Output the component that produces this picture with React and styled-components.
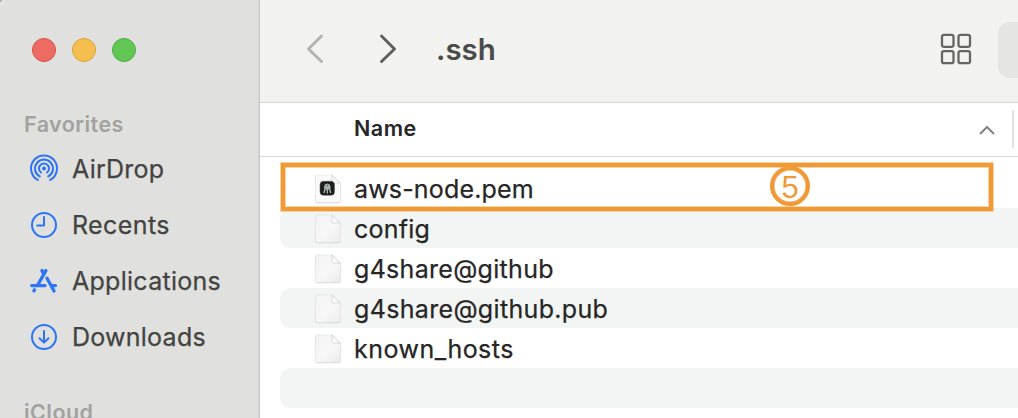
import React from 'react';
import styled, { createGlobalStyle } from 'styled-components';

const GlobalStyle = createGlobalStyle`
  * { box-sizing: border-box; }
  body { margin: 0; overflow: hidden; background: #fff; font-family: Inter, "Liberation Sans", sans-serif; }
`;

const Window = styled.div`
  position: relative;
  display: flex;
  width: 1018px;
  height: 418px;
  overflow: hidden;
  background: #fff;
`;

const Sidebar = styled.aside`
  flex: none;
  width: 260px;
  height: 418px;
  overflow: hidden;
  padding: 38px 0 0 24px;
  background: linear-gradient(135deg, #b5b5b3 1.5px, #f2f2f1 3px, #e0e0de 4.5px);
  border-right: 1px solid #c8c8c6;
  box-shadow: inset -2px 0 1px -1px #d4d4d2;
`;

const TrafficLights = styled.div`
  display: flex;
  gap: 16px;
  padding-left: 8px;
  height: 24px;
`;

const Light = styled.span`
  width: 24px;
  height: 24px;
  border-radius: 50%;
  background: ${(p) => p.$fill};
  border: 1px solid ${(p) => p.$edge};
`;

const SectionTitle = styled.h2`
  margin: ${(p) => p.$top}px 0 0;
  height: 28px;
  line-height: 28px;
  font-size: 21.5px;
  font-weight: 600;
  color: #a2a2a0;
  letter-spacing: 0.45px;
  white-space: nowrap;
`;

const NavList = styled.nav`
  display: flex;
  flex-direction: column;
  margin-top: 3px;
`;

const NavItem = styled.a`
  display: flex;
  align-items: center;
  height: 56px;
  gap: 8px;
  color: #434341;
`;

const NavIcon = styled.svg`
  flex: none;
  width: 40px;
  height: 40px;
  fill: none;
  stroke: #2d74f6;
  stroke-width: ${(p) => p.$weight || 2};
  stroke-linecap: round;
  stroke-linejoin: round;
`;

const Label = styled.span`
  font-size: 25px;
  line-height: 30px;
  white-space: nowrap;
  letter-spacing: ${(p) => p.$tracking}px;
  -webkit-text-stroke: 0.25px currentColor;
`;

const Main = styled.main`
  flex: 1;
  min-width: 0;
  display: flex;
  flex-direction: column;
`;

const Toolbar = styled.header`
  flex: none;
  display: flex;
  align-items: center;
  height: 103px;
  padding: 0 0 5px 44px;
  background: #f2f2f0;
  border-bottom: 1px solid #d5d5d4;
`;

const Chevron = styled.svg`
  flex: none;
  width: 24px;
  height: 36px;
  margin-right: ${(p) => p.$gap}px;
  fill: none;
  stroke: ${(p) => p.$color};
  stroke-width: 3;
  stroke-linecap: round;
  stroke-linejoin: round;
`;

const Title = styled.h1`
  margin: 0;
  flex: 1;
  font-size: 29.5px;
  line-height: 36px;
  font-weight: 600;
  color: #4b4b4a;
`;

const GridIcon = styled.svg`
  flex: none;
  width: 32px;
  height: 32px;
  margin-right: 26px;
  fill: none;
  stroke: #666664;
  stroke-width: 2.3;
`;

const ViewButton = styled.div`
  flex: none;
  width: 20px;
  height: 56px;
  margin-top: 2px;
  border-radius: 12px 0 0 12px;
  background: #e5e5e3;
`;

const ColumnHeader = styled.div`
  flex: none;
  display: flex;
  align-items: center;
  height: 54px;
  padding: 0 4px 2px 94px;
  border-bottom: 1px solid #d9d9d9;
`;

const ColumnName = styled.span`
  flex: 1;
  margin-bottom: 2px;
  font-size: 21.5px;
  line-height: 28px;
  font-weight: 600;
  color: #262626;
  letter-spacing: 0.5px;
`;

const SortArrow = styled.svg`
  width: 18px;
  height: 12px;
  margin: 3px 16px 0 0;
  fill: none;
  stroke: #838383;
  stroke-width: 2;
`;

const Divider = styled.span`
  width: 2px;
  height: 38px;
  margin-top: 1px;
  background: #e2e2e2;
`;

const FileList = styled.div`
  display: flex;
  flex-direction: column;
  padding: 11px 0 0 20px;
`;

const FileRow = styled.div`
  display: flex;
  align-items: center;
  height: 40px;
  padding-left: 32px;
  gap: 6px;
  color: #262626;
  border-radius: 10px 0 0 10px;
  background: ${(p) => (p.$shaded ? '#f3f5f4' : 'transparent')};

  ${Label} {
    padding-top: 2px;
  }
`;

const FileIcon = styled.svg`
  flex: none;
  width: 36px;
  height: 36px;
`;

const Highlight = styled.div`
  position: absolute;
  left: 281px;
  top: 163px;
  width: 712px;
  height: 48px;
  border: 4px solid #f09a37;
  box-shadow: 0 0 0 1px #f9d3a3, inset 0 0 0 1px #f9d3a3;
`;

const StepBadge = styled.div`
  position: absolute;
  left: 770px;
  top: 166px;
  width: 40px;
  height: 40px;
  display: flex;
  align-items: center;
  justify-content: center;
  padding-top: 2px;
  border: 4.5px solid #f09a37;
  border-radius: 50%;
  font: 31px/31px "Liberation Sans", sans-serif;
  color: #f09a37;
  box-shadow: inset 0 0 0 0.5px #f09a37;
`;

const AirDropIcon = () => (
  <NavIcon viewBox="0 0 40 40">
    <circle cx="20" cy="19.5" r="2" fill="#2d74f6" stroke="none" />
    <path d="M17 23.5A5 5 0 1 1 23 23.5" />
    <path d="M15.7 27.4A9 9 0 1 1 24.3 27.4" />
    <path d="M13.8 30.9A13 13 0 1 1 26.2 30.9" />
  </NavIcon>
);

const RecentsIcon = () => (
  <NavIcon viewBox="0 0 40 40">
    <circle cx="20" cy="20" r="12" />
    <path d="M20 12V20.5H13.2" />
  </NavIcon>
);

const ApplicationsIcon = () => (
  <NavIcon viewBox="0 0 40 40" $weight={3.3}>
    <path d="M21.9 9.6L14 23.5" />
    <path d="M17.9 9.6L19.5 12.4" />
    <path d="M23 17.2L30 30" />
    <path d="M7.7 24.6H21M27.5 24.6H31.5" />
    <path d="M10.5 28.8L9.9 29.8" />
  </NavIcon>
);

const DownloadsIcon = () => (
  <NavIcon viewBox="0 0 40 40">
    <circle cx="20" cy="20" r="12" />
    <path d="M20 14V25M15.5 21.3L20 25.6L24.5 21.3" />
  </NavIcon>
);

const DocumentIcon = ({ keychain }) => (
  <FileIcon viewBox="0 0 36 36">
    <defs>
      <linearGradient id="page" x1="0" y1="0" x2="1" y2="1">
        <stop offset="0" stopColor="#f3f3f3" />
        <stop offset=".55" stopColor="#f7f7f7" />
        <stop offset="1" stopColor="#ebebeb" />
      </linearGradient>
      <linearGradient id="fold" x1="0" y1="1" x2="1" y2="0">
        <stop offset="0" stopColor="#fff" />
        <stop offset=".5" stopColor="#fafafa" />
        <stop offset="1" stopColor="#dcdcdc" />
      </linearGradient>
    </defs>
    <path d="M4.5 6H20.5L28.5 13.3V32Q28.5 33.2 27 33.2H5Q3.5 33.2 3.5 32V7Q3.5 6 4.5 6Z" fill="#c4c4c4" opacity=".75" />
    <path d="M4.5 5H20L28.5 13V31.2Q28.5 32.4 27.3 32.4H4.7Q3.5 32.4 3.5 31.2V6Q3.5 5 4.5 5Z" fill={keychain ? '#fafafa' : 'url(#page)'} stroke="#e0e0e0" strokeWidth=".6" />
    <path d="M20 5L28 13H21Q20 13 20 12Z" fill="url(#fold)" stroke="#cacaca" strokeWidth=".7" />
    {keychain && (
      <g>
        <rect x="8" y="11.3" width="14.5" height="14" rx="3.5" fill="#1c1c1c" stroke="#555" strokeWidth=".5" />
        <path d="M12.8 14.6L15.2 13.4L17.8 14.6L18.8 17.5L17.6 19.5H13L11.8 17.5Z" fill="#a8afaf" />
        <path d="M13 18.8L12 23M15.3 19V23.6M17.6 18.8L18.6 23" stroke="#b6baba" strokeWidth="1.3" />
        <circle cx="15.3" cy="15.6" r=".8" fill="#525959" />
      </g>
    )}
  </FileIcon>
);

const places = [
  { name: 'AirDrop', Icon: AirDropIcon, tracking: 0.25 },
  { name: 'Recents', Icon: RecentsIcon, tracking: 0.4 },
  { name: 'Applications', Icon: ApplicationsIcon, tracking: 0.28 },
  { name: 'Downloads', Icon: DownloadsIcon, tracking: 0.25 },
];

const files = [
  { name: 'aws-node.pem', keychain: true, tracking: 0.17 },
  { name: 'config', tracking: 0.25 },
  { name: 'g4share@github', tracking: 0.3 },
  { name: 'g4share@github.pub', tracking: 0.33 },
  { name: 'known_hosts', tracking: 0.48 },
];

export default function App() {
  return (
    <>
      <GlobalStyle />
      <Window>
        <Sidebar>
          <TrafficLights>
            <Light $fill="#ed6b60" $edge="#d35047" />
            <Light $fill="#f5bf4f" $edge="#d9a13c" />
            <Light $fill="#62c655" $edge="#4fae42" />
          </TrafficLights>
          <SectionTitle $top={48}>Favorites</SectionTitle>
          <NavList>
            {places.map(({ name, Icon, tracking }) => (
              <NavItem key={name}>
                <Icon />
                <Label $tracking={tracking}>{name}</Label>
              </NavItem>
            ))}
          </NavList>
          <SectionTitle $top={33}>iCloud</SectionTitle>
        </Sidebar>
        <Main>
          <Toolbar>
            <Chevron viewBox="0 0 24 36" $color="#b3b3b1" $gap={48}>
              <path d="M17.5 5L4.5 18L17.5 30.5" />
            </Chevron>
            <Chevron viewBox="0 0 24 36" $color="#5f5f5d" $gap={36}>
              <path d="M5.5 5L18.5 18L5.5 30.5" />
            </Chevron>
            <Title>.ssh</Title>
            <GridIcon viewBox="0 0 32 32">
              <rect x="2" y="1.8" width="11.5" height="12" rx="2" />
              <rect x="18.5" y="1.8" width="11.5" height="12" rx="2" />
              <rect x="2" y="18.2" width="11.5" height="12" rx="2" />
              <rect x="18.5" y="18.2" width="11.5" height="12" rx="2" />
            </GridIcon>
            <ViewButton />
          </Toolbar>
          <ColumnHeader>
            <ColumnName>Name</ColumnName>
            <SortArrow viewBox="0 0 18 12">
              <path d="M2 10L9 3L16 10" />
            </SortArrow>
            <Divider />
          </ColumnHeader>
          <FileList>
            {files.map(({ name, keychain, tracking }, i) => (
              <FileRow key={name} $shaded={i % 2 === 1}>
                <DocumentIcon keychain={keychain} />
                <Label $tracking={tracking}>{name}</Label>
              </FileRow>
            ))}
            <FileRow $shaded />
          </FileList>
        </Main>
        <Highlight />
        <StepBadge>5</StepBadge>
      </Window>
    </>
  );
}
